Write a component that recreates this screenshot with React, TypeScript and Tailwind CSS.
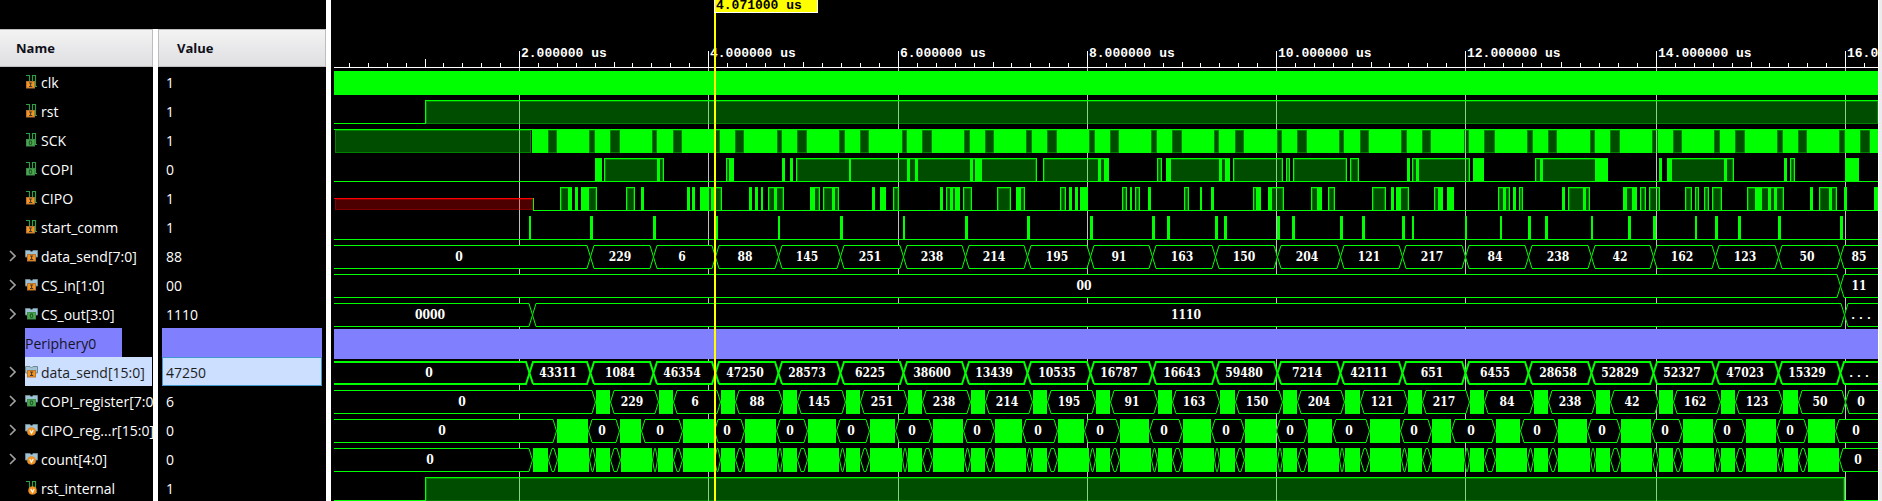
import React from "react";

type Span = [number, number];
type Kind = "in" | "out" | "var";

interface Signal {
  name: string;
  value: string;
  kind: Kind;
  bus?: boolean;
  divider?: boolean;
  selected?: boolean;
}

const SIGNALS: Signal[] = [
  { name: "clk", value: "1", kind: "in" },
  { name: "rst", value: "1", kind: "in" },
  { name: "SCK", value: "1", kind: "out" },
  { name: "COPI", value: "0", kind: "out" },
  { name: "CIPO", value: "1", kind: "in" },
  { name: "start_comm", value: "1", kind: "in" },
  { name: "data_send[7:0]", value: "88", kind: "in", bus: true },
  { name: "CS_in[1:0]", value: "00", kind: "in", bus: true },
  { name: "CS_out[3:0]", value: "1110", kind: "out", bus: true },
  { name: "Periphery0", value: "", kind: "in", divider: true },
  { name: "data_send[15:0]", value: "47250", kind: "in", bus: true, selected: true },
  { name: "COPI_register[7:0]", value: "6", kind: "out", bus: true },
  { name: "CIPO_reg...r[15:0]", value: "0", kind: "var", bus: true },
  { name: "count[4:0]", value: "0", kind: "var", bus: true },
  { name: "rst_internal", value: "1", kind: "var" },
];

const START = 334;
const END = 1878;
const GREEN = "#00ff00";

const laneTop = (row: number) => 71 + 29 * row;

const MAJOR: { x: number; label: string }[] = [
  { x: 519, label: "2.000000 us" },
  { x: 708, label: "4.000000 us" },
  { x: 898, label: "6.000000 us" },
  { x: 1087, label: "8.000000 us" },
  { x: 1276, label: "10.000000 us" },
  { x: 1465, label: "12.000000 us" },
  { x: 1656, label: "14.000000 us" },
  { x: 1845, label: "16.000000 us" },
];

const SCK_IDLE: Span[] = [
  [548, 557], [589, 595], [610, 620], [652, 657], [673, 682], [714, 720], [735, 744],
  [777, 782], [797, 807], [839, 845], [860, 869], [902, 907], [922, 932], [964, 970],
  [985, 994], [1026, 1032], [1047, 1057], [1089, 1095], [1110, 1119], [1151, 1157],
  [1172, 1182], [1214, 1219], [1235, 1244], [1277, 1282], [1297, 1307], [1339, 1344],
  [1360, 1369], [1401, 1407], [1422, 1431], [1464, 1469], [1484, 1495], [1527, 1533],
  [1548, 1557], [1590, 1595], [1610, 1620], [1652, 1658], [1673, 1682], [1714, 1720],
  [1735, 1745], [1777, 1783], [1798, 1807], [1839, 1845], [1860, 1870],
];

const COPI_HIGH: Span[] = [
  [604, 664], [726, 734], [796, 1037], [1043, 1109], [1157, 1162], [1166, 1230],
  [1233, 1283], [1286, 1290], [1293, 1347], [1350, 1359], [1412, 1470], [1535, 1608],
  [1667, 1734], [1790, 1795],
];
const COPI_BUSY: Span[] = [
  [595, 602], [657, 660], [729, 734], [782, 785], [790, 793], [849, 851], [907, 910],
  [915, 918], [970, 973], [975, 982], [1098, 1101], [1104, 1109], [1166, 1171],
  [1219, 1222], [1225, 1230], [1407, 1410], [1416, 1419], [1473, 1484], [1540, 1543],
  [1595, 1608], [1659, 1662], [1667, 1672], [1724, 1727], [1784, 1787], [1845, 1859],
];

const CIPO_HIGH: Span[] = [
  [560, 572], [581, 597], [626, 635], [700, 722], [768, 784], [810, 820], [823, 839],
  [893, 899], [946, 960], [963, 972], [997, 1011], [1016, 1025], [1060, 1066],
  [1122, 1127], [1135, 1140], [1184, 1189], [1253, 1261], [1268, 1284], [1311, 1322],
  [1328, 1335], [1372, 1386], [1396, 1409], [1434, 1443], [1498, 1510], [1519, 1523],
  [1568, 1590], [1623, 1637], [1640, 1646], [1649, 1660], [1685, 1692], [1695, 1699],
  [1704, 1709], [1712, 1722], [1747, 1784], [1819, 1837],
];
const CIPO_BUSY: Span[] = [
  [568, 572], [575, 578], [581, 589], [641, 644], [687, 690], [692, 695], [700, 709],
  [711, 715], [749, 752], [755, 758], [761, 763], [774, 777], [810, 815], [832, 835],
  [872, 875], [880, 886], [940, 943], [950, 953], [955, 960], [1016, 1021], [1069, 1072],
  [1075, 1078], [1080, 1088], [1130, 1132], [1148, 1151], [1200, 1202], [1211, 1214],
  [1256, 1261], [1268, 1272], [1317, 1322], [1391, 1394], [1396, 1401], [1438, 1443],
  [1447, 1454], [1503, 1506], [1513, 1516], [1562, 1565], [1583, 1586], [1623, 1627],
  [1632, 1637], [1755, 1762], [1768, 1771], [1774, 1777], [1810, 1813], [1829, 1832],
  [1844, 1847], [1874, 1878],
];

const START_COMM: Span[] = [
  [529, 531], [590, 593], [653, 656], [715, 718], [778, 780], [840, 843], [903, 905],
  [965, 968], [1027, 1030], [1090, 1093], [1152, 1155], [1167, 1170], [1215, 1218],
  [1224, 1227], [1277, 1280], [1292, 1295], [1340, 1343], [1362, 1365], [1402, 1405],
  [1412, 1414], [1465, 1467], [1500, 1502], [1528, 1531], [1545, 1548], [1591, 1593],
  [1628, 1631], [1653, 1656], [1695, 1697], [1715, 1718], [1738, 1741], [1778, 1781],
  [1840, 1843],
];

const WORD_EDGES = [
  590, 653, 715, 778, 840, 903, 965, 1027, 1090, 1152, 1215, 1277, 1340, 1402, 1465,
  1528, 1591, 1653, 1715, 1778, 1840,
];
const BYTES = [
  "229", "6", "88", "145", "251", "238", "214", "195", "91", "163", "150", "204", "121",
  "217", "84", "238", "42", "162", "123", "50",
];
const WORDS = [
  "1084", "46354", "47250", "28573", "6225", "38600", "13439", "10535", "16787", "16643",
  "59480", "7214", "42111", "651", "6455", "28658", "52829", "52327", "47023", "15329",
];

const COPI_REG: Span[] = [
  [610, 658], [673, 720], [735, 782], [797, 845], [860, 907], [922, 970], [985, 1032],
  [1047, 1095], [1110, 1157], [1172, 1219], [1235, 1282], [1297, 1344], [1360, 1407],
  [1422, 1469], [1484, 1533], [1548, 1595], [1610, 1658], [1673, 1720], [1735, 1782],
  [1798, 1845],
];
const CIPO_REG: Span[] = [
  [588, 619], [641, 682], [714, 744], [776, 807], [836, 869], [895, 932], [963, 994],
  [1022, 1057], [1084, 1119], [1149, 1182], [1211, 1244], [1276, 1307], [1332, 1369],
  [1400, 1431], [1451, 1495], [1520, 1557], [1587, 1620], [1651, 1682], [1713, 1745],
  [1776, 1807],
];

interface Segment {
  from: number;
  to: number;
  label?: string;
}

const chain = (edges: number[], labels: string[]): Segment[] => {
  const all = [START, ...edges, END];
  return labels.map((label, i) => ({ from: all[i], to: all[i + 1], label }));
};

const labelX = (s: Segment) => {
  const from = s.from === START ? START - 2 : s.from;
  const to = s.to === END ? END + 3 : s.to;
  return Math.round((from + to) / 2) - 2;
};

function Low({ row, from = START, to = END }: { row: number; from?: number; to?: number }) {
  return <rect x={from} y={laneTop(row) + 23} width={to - from} height={1} fill={GREEN} />;
}

function Busy({ row, spans }: { row: number; spans: Span[] }) {
  return (
    <>
      {spans.map(([a, b]) => (
        <rect key={a} x={a} y={laneTop(row)} width={b - a} height={24} fill={GREEN} />
      ))}
    </>
  );
}

function Shade({ x, y, w, h, color }: { x: number; y: number; w: number; h: number; color: string }) {
  return (
    <>
      <rect x={x} y={y} width={w} height={h} fill={color} fillOpacity={0.3} />
      <rect
        x={x + 0.5}
        y={y + 0.5}
        width={Math.max(w - 1, 0)}
        height={h - 1}
        fill="none"
        stroke={color}
        strokeOpacity={0.3}
      />
    </>
  );
}

function High({ row, spans, edges = true }: { row: number; spans: Span[]; edges?: boolean }) {
  const y = laneTop(row);
  return (
    <>
      {spans.map(([a, b]) => (
        <g key={a}>
          <Shade x={a + 1} y={y + 1} w={b - a - 2} h={23} color={GREEN} />
          <rect x={a} y={y} width={b - a} height={1} fill={GREEN} />
          {edges && <rect x={a} y={y} width={1} height={24} fill={GREEN} />}
          {edges && <rect x={b - 1} y={y} width={1} height={24} fill={GREEN} />}
        </g>
      ))}
    </>
  );
}

function Bus({ row, segments, bold = false }: { row: number; segments: Segment[]; bold?: boolean }) {
  const w = bold ? 2 : 1;
  const top = laneTop(row) + w / 2;
  const bottom = laneTop(row) + 24 - w / 2;
  const mid = laneTop(row) + 12;
  return (
    <>
      {segments.slice(1).map((s, i) => {
        const prev = segments[i];
        return s.from - prev.to > 0 ? (
          <rect
            key={s.from}
            x={prev.to + 1}
            y={laneTop(row)}
            width={s.from - prev.to - 1}
            height={24}
            fill={GREEN}
          />
        ) : null;
      })}
      {segments.map((s) => {
        const slant = Math.min(4, (s.to - s.from) / 2);
        const first = s.from === START;
        const last = s.to === END;
        const x0 = first ? START : s.from + slant;
        const x1 = last ? END : s.to - slant + 1;
        const left = first
          ? `M${START} ${top}`
          : `M${x0} ${bottom}L${s.from + 0.5} ${mid}L${x0} ${top}`;
        const right = last
          ? `H${END}M${END} ${bottom}H${x0}`
          : `H${x1}L${s.to + 0.5} ${mid}L${x1} ${bottom}H${x0}`;
        const area = `${s.from},${mid} ${x0},${top} ${x1},${top} ${s.to},${mid} ${x1},${bottom} ${x0},${bottom}`;
        return (
          <g key={s.from}>
            <polygon points={area} fill="#000" />
            <path d={left + right} fill="none" stroke={GREEN} strokeWidth={w} />
            {s.label && (
              <text
                x={labelX(s)}
                y={laneTop(row) + 16}
                textAnchor="middle"
                fill="#fff"
                className={
                  s.label === "..."
                    ? "text-[13px]"
                    : "font-['DejaVu_Serif_Condensed','DejaVu_Serif',serif] text-[12px] font-bold"
                }
              >
                {s.label}
              </text>
            )}
          </g>
        );
      })}
    </>
  );
}

function Ruler() {
  const stops = [330, ...MAJOR.map((m) => m.x), 2034];
  const minor: { x: number; half: boolean }[] = [];
  stops.slice(0, -1).forEach((a, i) => {
    const step = (stops[i + 1] - a) / 10;
    for (let k = 1; k < 10; k++) {
      const x = Math.round(a + step * k);
      if (x < END) minor.push({ x, half: k === 5 });
    }
  });
  return (
    <g fill="#fff">
      <rect x={START} y={67} width={END - START} height={1} />
      {minor.map((t) => {
        const y = t.x === 425 ? 59 : t.half ? 62 : 63;
        return <rect key={t.x} x={t.x} y={y} width={1} height={67 - y} />;
      })}
      {MAJOR.map((m) => (
        <g key={m.x}>
          <rect x={m.x} y={51} width={1} height={17} />
          <text x={m.x + 2} y={57}>
            {m.label}
          </text>
        </g>
      ))}
    </g>
  );
}

function Waveforms() {
  const counts: Segment[] = [
    { from: START, to: 532, label: "0" },
    ...SCK_IDLE.filter(([a]) => a < 1839).map(([from, to]) => ({ from, to })),
    { from: 1839, to: END, label: "0" },
  ];
  const copiReg: Segment[] = [
    { from: START, to: 595, label: "0" },
    ...COPI_REG.map(([from, to], i) => ({ from, to, label: BYTES[i] })),
    { from: 1845, to: END, label: "0" },
  ];
  const cipoReg: Segment[] = [
    { from: START, to: 556, label: "0" },
    ...CIPO_REG.map(([from, to]) => ({ from, to, label: "0" })),
    { from: 1835, to: END, label: "0" },
  ];
  const sckBusy: Span[] = [532, ...SCK_IDLE.map((s) => s[1])].map((from, i) => [
    from,
    SCK_IDLE[i] ? SCK_IDLE[i][0] : END,
  ]);

  return (
    <svg
      width={1547}
      height={501}
      viewBox="331 0 1547 501"
      className="block shrink-0 font-['Liberation_Mono',monospace] text-[13px] font-bold"
      role="img"
      aria-label="Signal waveforms"
    >
      <Ruler />
      {MAJOR.map((m) => (
        <rect key={m.x} x={m.x} y={68} width={1} height={433} fill="#c0c0c0" />
      ))}

      <rect x={START} y={laneTop(0)} width={END - START} height={24} fill={GREEN} />

      <Low row={1} to={425} />
      <High row={1} spans={[[425, END + 1]]} />

      <High row={2} spans={[[START, 532]]} edges={false} />
      {SCK_IDLE.map(([a, b]) => (
        <g key={a}>
          <Shade x={a} y={laneTop(2) + 1} w={b - a} h={23} color={GREEN} />
          <rect x={a} y={laneTop(2)} width={b - a} height={1} fill={GREEN} />
        </g>
      ))}
      <Busy row={2} spans={sckBusy} />

      <Low row={3} />
      <High row={3} spans={COPI_HIGH} />
      <Busy row={3} spans={COPI_BUSY} />

      <Low row={4} from={533} />
      <Shade x={335} y={199} w={198} h={11} color="#ff0000" />
      <rect x={START} y={198} width={199} height={1} fill="#ff0000" />
      <rect x={533} y={198} width={1} height={13} fill={GREEN} />
      <High row={4} spans={CIPO_HIGH} />
      <Busy row={4} spans={CIPO_BUSY} />

      <Low row={5} />
      <Busy row={5} spans={START_COMM} />

      <Bus row={6} segments={chain(WORD_EDGES, ["0", ...BYTES, "85"])} />
      <Bus row={7} segments={chain([1840], ["00", "11"])} />
      <Bus row={8} segments={chain([532, 1844], ["0000", "1110", "..."])} />

      <rect x={START} y={329} width={END - START} height={30} fill="#8080ff" />

      <Bus row={10} bold segments={chain([529, ...WORD_EDGES], ["0", "43311", ...WORDS, "..."])} />
      <Bus row={11} segments={copiReg} />
      <Bus row={12} segments={cipoReg} />
      <Bus row={13} segments={counts} />

      <Low row={14} to={425} />
      <High row={14} spans={[[425, 1845]]} />
      <Low row={14} from={1845} />

      <rect x={714} y={0} width={104} height={13} fill="#fff" />
      <rect x={715} y={0} width={102} height={12} fill="#ffff00" />
      <text x={716} y={9} fill="#000">
        4.071000 us
      </text>
      <rect x={714} y={13} width={2} height={488} fill="#ffff00" />
    </svg>
  );
}

function SignalIcon({ kind, bus }: { kind: Kind; bus?: boolean }) {
  const fill = kind === "out" ? "#4ca64c" : "#f7941d";
  return (
    <svg width={13} height={14} viewBox="0 0 13 14" className="block shrink-0" aria-hidden="true">
      {bus ? (
        <path d="M0.5 1.5H5L6.5 3L8 1.5H12.5V8H10V11H3V8H0.5Z" fill="#9fc3d6" stroke="#6f8792" />
      ) : (
        <path d="M1 0.5H4.5V10.5H7.5V0.5H10.5V11.5H12" fill="none" stroke="#2f9e44" strokeWidth={1.2} />
      )}
      {kind === "var" ? (
        <>
          <circle cx={bus ? 6.5 : 7.5} cy={bus ? 8.5 : 9.5} r={4} fill="#f7941d" stroke="#d9822b" strokeWidth={0.5} />
          <path d={bus ? "M4.8 7L6.5 10.2L8.2 7" : "M5.8 8L7.5 11.2L9.2 8"} fill="none" stroke="#fff" strokeWidth={1.2} />
        </>
      ) : (
        <g transform={bus ? "translate(1 -1)" : undefined}>
          <rect x={1.5} y={6.5} width={8} height={6.5} fill={fill} stroke={kind === "out" ? "#3c8c4c" : "#b87430"} />
          {kind === "in" ? (
            <path d="M4 8H7.2M4 11.5H7.2M5.6 8V11.5" fill="none" stroke="#3d3d3d" strokeWidth={1.1} />
          ) : (
            <ellipse cx={5.5} cy={9.8} rx={1.3} ry={1.9} fill="none" stroke="#1f5a2c" strokeWidth={1.1} />
          )}
        </g>
      )}
    </svg>
  );
}

function NameCell({ signal }: { signal: Signal }) {
  if (signal.divider) {
    return (
      <div className="ml-[25px] flex h-[29px] w-[97px] items-center bg-[#8080ff] pt-0.5 text-[#14141e]">
        {signal.name}
      </div>
    );
  }
  return (
    <div className="flex h-[29px] items-center overflow-hidden whitespace-nowrap">
      <div className="flex w-[25px] shrink-0 items-center justify-center">
        {signal.bus && (
          <button type="button" aria-label={`Expand ${signal.name}`} className="block">
            <svg width={7} height={12} viewBox="0 0 7 12" className="block">
              <path d="M1 1L6 6L1 11" fill="none" stroke="#a0a0a0" strokeWidth={1.6} />
            </svg>
          </button>
        )}
      </div>
      <div
        className={
          signal.selected
            ? "mr-px flex h-full flex-1 items-center gap-[3px] bg-[#ccdfff] text-[#1e1e1e]"
            : "flex h-full flex-1 items-center gap-[3px]"
        }
      >
        <SignalIcon kind={signal.kind} bus={signal.bus} />
        <span className="pt-0.5">{signal.name}</span>
      </div>
    </div>
  );
}

function ValueCell({ signal }: { signal: Signal }) {
  if (signal.divider) return <div className="mx-1 h-[29px] bg-[#8080ff]" />;
  return (
    <div
      className={
        signal.selected
          ? "mx-1 flex h-[29px] items-center border border-[#4397cf] bg-[#ccdfff] px-[3px] pt-0.5 text-[#1e1e1e]"
          : "mx-1 flex h-[29px] items-center px-1 pt-0.5"
      }
    >
      {signal.value}
    </div>
  );
}

export default function App() {
  return (
    <main className="flex h-screen overflow-hidden bg-black font-['Open_Sans','Noto_Sans',sans-serif] text-sm text-white">
      <div className="w-[326px] shrink-0 pt-[29px]">
        <table className="w-full table-fixed border-separate border-spacing-0">
          <colgroup>
            <col className="w-[153px]" />
            <col />
          </colgroup>
          <thead>
            <tr className="text-left text-[13px] text-[#0f0f19]">
              <th className="h-[38px] border border-l-0 border-[#bdbdbd] bg-linear-to-b from-[#f3f3f3] to-[#dfdfe2] p-0 pl-4 font-bold">
                Name
              </th>
              <th className="h-[38px] border-l-5 border-white p-0 font-bold">
                <div className="flex h-[38px] items-center border border-[#bdbdbd] bg-linear-to-b from-[#f3f3f3] to-[#dfdfe2] pl-[18px]">
                  Value
                </div>
              </th>
            </tr>
          </thead>
          <tbody>
            {SIGNALS.map((s) => (
              <tr key={s.name}>
                <td className="overflow-hidden p-0">
                  <NameCell signal={s} />
                </td>
                <td className="border-l-5 border-white p-0">
                  <ValueCell signal={s} />
                </td>
              </tr>
            ))}
          </tbody>
        </table>
      </div>
      <div className="w-[5px] shrink-0 bg-white" />
      <div className="flex min-w-0 flex-1 overflow-hidden">
        <Waveforms />
      </div>
      <div className="w-1 shrink-0 border-l border-white bg-[#ececec]" />
    </main>
  );
}
